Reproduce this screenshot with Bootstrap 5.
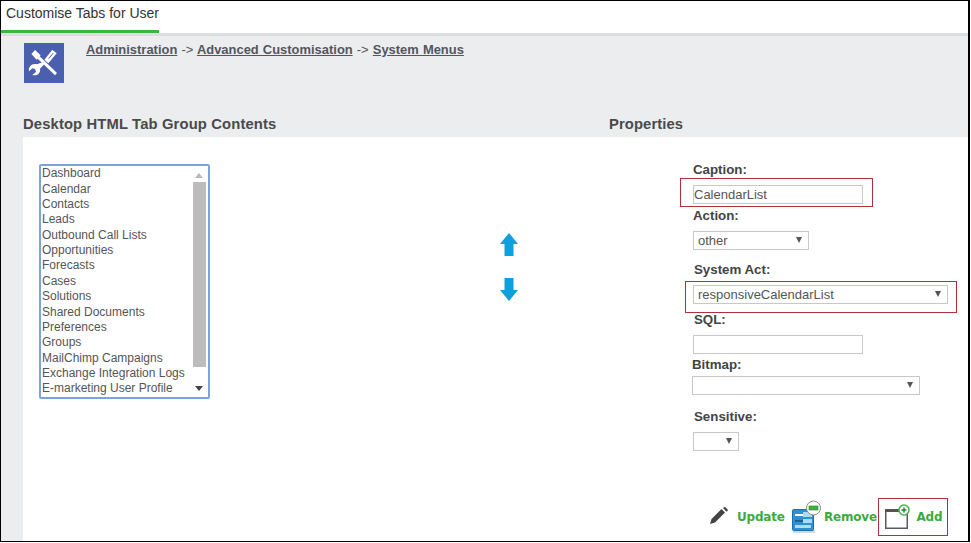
<!DOCTYPE html>
<html lang="en">
<head>
<meta charset="utf-8">
<title>Customise Tabs for User</title>
<link href="https://cdn.jsdelivr.net/npm/bootstrap@5.3.0/dist/css/bootstrap.min.css" rel="stylesheet">
<style>
html,body{height:100%;margin:0;background:#fff;overflow:hidden}
body{font-family:"Liberation Sans",Arial,sans-serif;color:#444;font-size:12px}
.frame{width:970px;height:542px;border:1px solid #000;border-right-width:2px;background:#ecedef;overflow:hidden;display:flex;flex-direction:column}
.topbar{height:35px;background:#fff;border-bottom:3px solid #dcdddd;flex:none;display:flex}
.tabhead{height:32px;padding:4px 0 0 5px;width:158px;font-size:14px;line-height:16px;color:#333;border-bottom:3px solid #3fb53f;white-space:nowrap}
.crumbrow{padding:7px 0 0 23px;height:68px;flex:none;gap:22px}
.appicon{width:40px;height:40px;background:#4a5fae;flex:none}
.crumbs{font-size:12.95px;font-weight:700;line-height:13px;white-space:nowrap;color:#555;word-spacing:.5px}
.crumbs a{color:#55555e;text-decoration:underline}
.crumbs span{font-weight:400;color:#555}
.heads{height:33px;padding:11px 0 0 22px;flex:none;font-size:14.8px;font-weight:700;line-height:18px;color:#4a4a4a;white-space:nowrap}
.headleft{width:586px;letter-spacing:.13px}
.headright{letter-spacing:.1px}
.panel{flex:1 1 auto;background:#fff;margin-left:22px;min-height:0}
.listcol{width:457px;padding:27px 0 0 16px;flex:none}
.listbox{width:171px;height:235px;border:2px solid #7da2e0;border-radius:2px;display:flex;background:#fff}
.listitems{flex:1 1 auto;padding:.3px 0 0 1px;font-size:12px;line-height:15.36px;color:#555;white-space:nowrap}
.sbar{width:16px;flex:none;margin-right:1px;display:flex;flex-direction:column;align-items:center;background:#fff}
.sup,.sdown{width:0;height:0;border-left:4px solid transparent;border-right:4px solid transparent}
.sup{border-bottom:5px solid #b8b8b8;margin:7px 0 4px}
.sdown{border-top:5px solid #444;margin:auto 0 6px}
.sthumb{width:13px;height:185px;background:#bcbcbc}
.arrowcol{width:58px;flex:none;padding-top:96px;gap:22px;align-items:center}
.arrowcol svg{display:block}
.propcol{flex:1 1 auto;padding:24px 0 0 0;position:relative;margin-left:155px;min-width:0}
.lbl{font-size:13.3px;font-weight:700;line-height:18px;height:16px;color:#444;margin:0;white-space:nowrap}
.fld{display:block;height:19px;border:1px solid #c8c8c8;background:#fff;font-size:13px;line-height:17px;color:#555;padding:0;position:relative;white-space:nowrap;font-family:"Liberation Sans",Arial,sans-serif;outline:0;border-radius:0}
.caret{position:absolute;right:6px;top:5px;width:0;height:0;border-left:3.5px solid transparent;border-right:3.5px solid transparent;border-top:6px solid #555}
.ftxt{width:170px}
.mt-cap{margin-top:8px}
.mt-act{margin-top:3px}
.f-action{width:116px;padding-left:4px;margin-top:8px}
.mt-sys{margin:11px 0 0 1px}
.f-sys{width:255px;padding-left:4px;margin-top:8px}
.mt-sql{margin:7px 0 0 1px}
.f-sql{margin-top:8px}
.mt-bit{margin:2px 0 0 -1px}
.f-bit{width:228px;margin:4px 0 0 -1px}
.mt-sens{margin:13px 0 0 1px}
.f-sens{width:46px;margin-top:8px}
.acttxt{display:block;margin-top:2px;font-family:"DejaVu Sans",sans-serif;font-size:12px;font-weight:700;letter-spacing:-.2px;color:#3cab3c}
.redbox{position:absolute;border:1px solid #b32f3a;pointer-events:none}
.rb1{left:-13px;top:41px;width:193px;height:29px}
.rb2{left:-8px;top:144px;width:272px;height:32px}
.rb3{left:185px;top:361px;width:70px;height:38px}
.act{position:absolute;display:flex;align-items:center;height:40px;top:359px}
.a-pen{left:16px}.a-upd{left:44px}.a-rmi{left:99px}.a-rmt{left:131px}.a-adi{left:191px}.a-adt{left:223.500px}
</style>
</head>
<body>
<div class="frame">
  <div class="topbar"><div class="tabhead">Customise Tabs for User</div></div>
  <div class="crumbrow d-flex">
    <div class="appicon">
      <svg width="40" height="40" viewBox="12 9 120 120" fill="#fff" class="d-block">
        <path d="M34 42l11-12 17 16-3 3 52 50-6 7-52-50-3 3z"/>
        <path d="M97 29l13 11-25 30-12-11z"/>
        <path d="M69 66l5 5-14 15c3 11-8 24-23 19l11-10-3-8-8-2-10 9c-3-14 10-26 24-21z"/>
        <path d="M100 39L86 56" stroke="#4a5fae" stroke-width="3" fill="none"/>
      </svg>
    </div>
    <div class="crumbs"><a href="#">Administration</a> <span>-&gt;</span> <a href="#">Advanced Customisation</a> <span>-&gt;</span> <a href="#">System Menus</a></div>
  </div>
  <div class="heads d-flex"><div class="headleft">Desktop HTML Tab Group Contents</div><div class="headright">Properties</div></div>
  <div class="panel d-flex">
    <div class="listcol">
      <div class="listbox">
        <div class="listitems">
          <div>Dashboard</div><div>Calendar</div><div>Contacts</div><div>Leads</div><div>Outbound Call Lists</div><div>Opportunities</div><div>Forecasts</div><div>Cases</div><div>Solutions</div><div>Shared Documents</div><div>Preferences</div><div>Groups</div><div>MailChimp Campaigns</div><div>Exchange Integration Logs</div><div>E-marketing User Profile</div>
        </div>
        <div class="sbar"><div class="sup"></div><div class="sthumb"></div><div class="sdown"></div></div>
      </div>
    </div>
    <div class="arrowcol d-flex flex-column">
      <svg width="20" height="23" viewBox="0 0 20 23"><path fill="#0f9fdc" d="M10 0l9 11h-4.500v12h-9V11H1z"/></svg>
      <svg width="20" height="23" viewBox="0 0 20 23"><path fill="#0f9fdc" d="M5.500 0h9v12H19l-9 11L1 12h4.500z"/></svg>
    </div>
    <div class="propcol">
      <div class="lbl">Caption:</div>
      <input class="fld ftxt mt-cap" value="CalendarList" aria-label="Caption">
      <div class="lbl mt-act">Action:</div>
      <div class="fld f-action">other<i class="caret"></i></div>
      <div class="lbl mt-sys">System Act:</div>
      <div class="fld f-sys">responsiveCalendarList<i class="caret"></i></div>
      <div class="lbl mt-sql">SQL:</div>
      <input class="fld ftxt f-sql" aria-label="SQL">
      <div class="lbl mt-bit">Bitmap:</div>
      <div class="fld f-bit"><i class="caret"></i></div>
      <div class="lbl mt-sens">Sensitive:</div>
      <div class="fld f-sens"><i class="caret"></i></div>
      <div class="redbox rb1"></div>
      <div class="redbox rb2"></div>
      <div class="redbox rb3"></div>
      <div class="act a-pen">
        <svg width="20" height="18" viewBox="0 0 20 18"><path fill="#444" d="M1 17l1.500-5L12.500 2l3.500 3.500L6 15.500zM14 1l1.200-.8c.5-.3 1-.2 1.400.2l2 2c.4.400.4 1 0 1.400l-1 1z"/></svg>
      </div>
      <div class="act a-upd"><span class="acttxt">Update</span></div>
      <div class="act a-rmi">
        <svg width="30" height="34" viewBox="0 0 30 34"><rect x="1" y="31" width="22" height="3" fill="#d5d8da"/><rect x=".5" y="10.500" width="21" height="21" rx="1" fill="#2f8fd0" stroke="#1b6fae"/><rect x="11" y="13" width="9" height="5" fill="#a9dcf5"/><rect x="11" y="20" width="9" height="4" fill="#a9dcf5"/><rect x="3" y="15" width="8" height="2" fill="#fff"/><rect x="3" y="21" width="8" height="2" fill="#1b5f90"/><rect x="3" y="26" width="16" height="3" fill="#a9dcf5"/><circle cx="21.500" cy="9" r="7" fill="#fff" stroke="#888"/><rect x="17" y="7" width="9" height="4" fill="#3fb53f" stroke="#2d7d2d" stroke-width=".6"/></svg>
      </div>
      <div class="act a-rmt"><span class="acttxt">Remove</span></div>
      <div class="act a-adi">
        <svg width="26" height="30" viewBox="0 0 26 30"><rect x="1.750" y="8.750" width="21.500" height="18.500" fill="#fff" stroke="#5a5a5a" stroke-width="1.500"/><rect x="1" y="8" width="17" height="3" fill="#555"/><circle cx="20" cy="9" r="5" fill="#fff" stroke="#3fb53f" stroke-width="1.500"/><path d="M20 6.500v5M17.500 9h5" stroke="#2f7f3f" stroke-width="1.500"/></svg>
      </div>
      <div class="act a-adt"><span class="acttxt">Add</span></div>
    </div>
  </div>
</div>
</body>
</html>
